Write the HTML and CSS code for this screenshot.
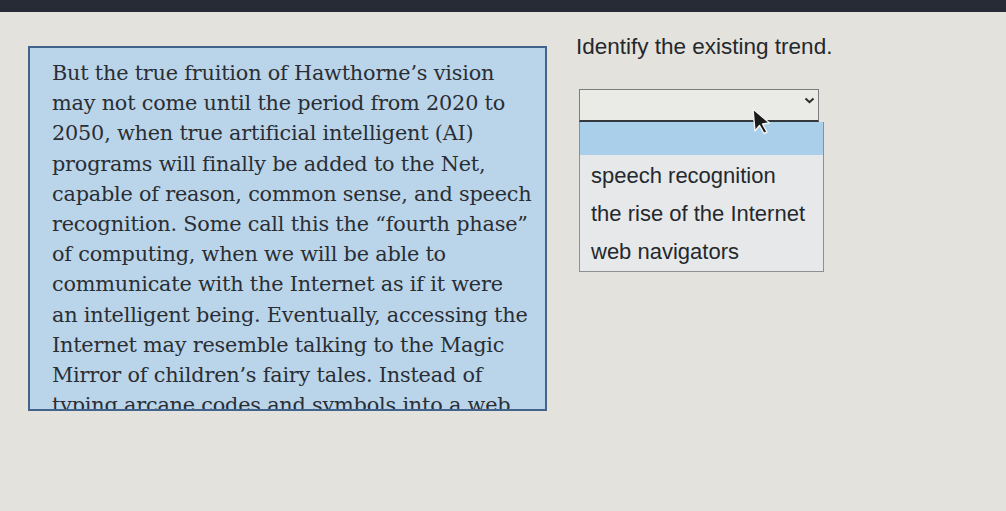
FILE: index.html
```html
<!DOCTYPE html>
<html>
<head>
<meta charset="utf-8">
<link rel="stylesheet" href="styles.css">
</head>
<body>
<div class="topbar"></div>
<div class="main">
  <div class="passage">
    <p>But the true fruition of Hawthorne’s vision<br>may not come until the period from 2020 to<br>2050, when true artificial intelligent (AI)<br>programs will finally be added to the Net,<br>capable of reason, common sense, and speech<br>recognition. Some call this the “fourth phase”<br>of computing, when we will be able to<br>communicate with the Internet as if it were<br>an intelligent being. Eventually, accessing the<br>Internet may resemble talking to the Magic<br>Mirror of children’s fairy tales. Instead of<br>typing arcane codes and symbols into a web<br>browser, you will simply talk to it.</p>
  </div>
  <div class="question">
    <div class="prompt">Identify the existing trend.</div>
    <div class="select">
      <div class="select-box">
        <svg class="chev" width="11" height="7" viewBox="0 0 11 7"><path d="M1.5 1.5 L5.5 5.2 L9.5 1.5" fill="none" stroke="#2a2a2a" stroke-width="2"/></svg>
      </div>
      <ul class="options">
        <li class="opt selected">&nbsp;</li>
        <li class="opt">speech recognition</li>
        <li class="opt">the rise of the Internet</li>
        <li class="opt">web navigators</li>
      </ul>
      <svg class="cursor" width="24" height="30" viewBox="0 0 24 30"><path d="M2 2 L4 24 L8.5 18.5 L13 26.5 L16 25 L11.5 17 L18.5 16 Z" fill="#1a1a1a" stroke="#f2f2f2" stroke-width="1.4" stroke-linejoin="round"/></svg>
    </div>
  </div>
</div>
</body>
</html>
```
FILE: styles.css
```css
html, body {
  margin: 0;
  padding: 0;
  background: #e4e2dc;
  width: 1006px;
  height: 511px;
  overflow: hidden;
}
.topbar {
  height: 12px;
  background: #262b36;
}
.main {
  display: flex;
  align-items: flex-start;
  padding-left: 28px;
  gap: 29px;
}
.passage {
  margin-top: 34px;
  width: 519px;
  height: 365px;
  overflow: hidden;
  background: #bad5ea;
  border: 2px solid #42648c;
  box-sizing: border-box;
  padding: 10px 10px 0 22px;
}
.passage p {
  margin: 0;
  font-family: "DejaVu Serif", Georgia, serif;
  font-size: 20.8px;
  line-height: 30.2px;
  color: #2a2e33;
  white-space: nowrap;
  letter-spacing: -0.2px;
}
.question {
  display: flex;
  flex-direction: column;
  padding-top: 22px;
}
.prompt {
  font-family: "Liberation Sans", Arial, sans-serif;
  font-size: 22.5px;
  color: #25282c;
  line-height: 26px;
  letter-spacing: 0;
}
.select {
  position: relative;
  margin-top: 29px;
  margin-left: 3px;
  width: 245px;
}
.select-box {
  width: 240px;
  height: 33px;
  box-sizing: border-box;
  border: 1px solid #7a7c80;
  border-bottom: 2px solid #34373b;
  background: #eaeae6;
  display: flex;
  justify-content: flex-end;
  align-items: center;
  padding-right: 3px;
}
.chev {
  margin-top: -10px;
}
.options {
  list-style: none;
  margin: 0;
  padding: 0;
  width: 245px;
  box-sizing: border-box;
  background: #e6e8ea;
  border: 1px solid #8c8f93;
  border-top: none;
}
.opt {
  font-family: "Liberation Sans", Arial, sans-serif;
  font-size: 22px;
  letter-spacing: 0;
  color: #25282c;
  height: 38px;
  line-height: 38px;
  padding-left: 11px;
}
.opt.selected {
  background: #a9cfea;
  height: 33px;
  margin-bottom: 2px;
}
.cursor {
  position: absolute;
  left: 172px;
  top: 18px;
}
```
